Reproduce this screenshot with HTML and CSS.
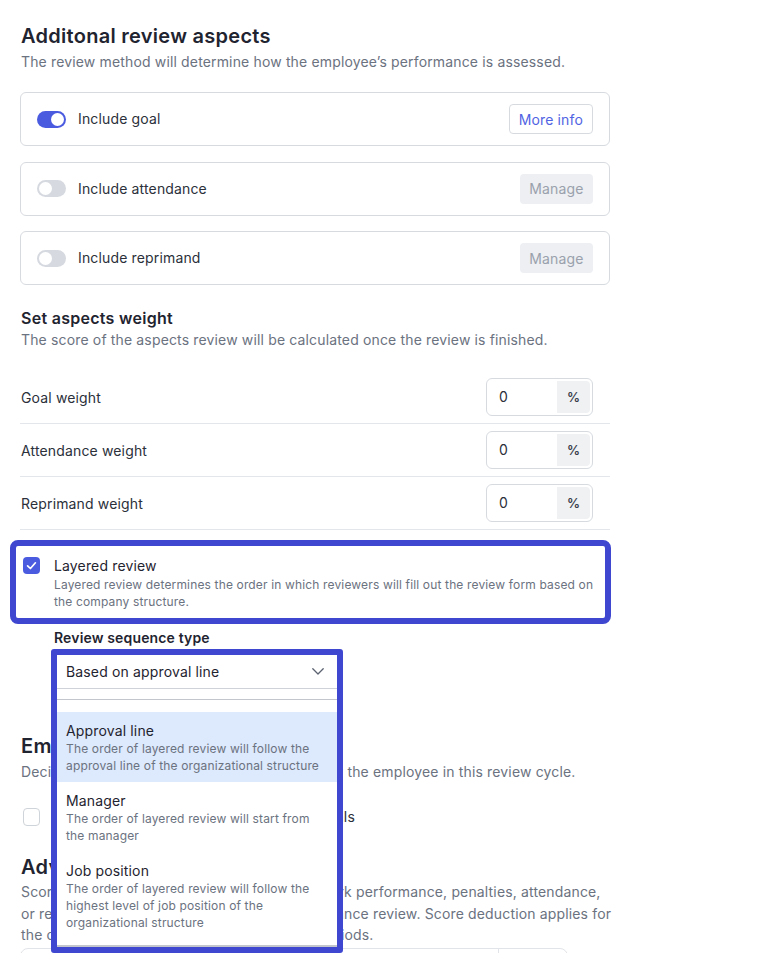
FILE: index.html
```html
<!DOCTYPE html>
<html lang="en">
<head>
<meta charset="utf-8">
<title>Review aspects</title>
<link rel="stylesheet" href="styles.css">
</head>
<body>
<main class="page">
  <section class="block">
    <h1 class="h1">Additonal review aspects</h1>
    <p class="sub">The review method will determine how the employee’s performance is assessed.</p>
    <div class="cards">
      <div class="card">
        <div class="card-left"><span class="toggle on"></span><span class="card-label">Include goal</span></div>
        <button class="btn btn-outline">More info</button>
      </div>
      <div class="card">
        <div class="card-left"><span class="toggle"></span><span class="card-label">Include attendance</span></div>
        <button class="btn btn-muted">Manage</button>
      </div>
      <div class="card">
        <div class="card-left"><span class="toggle"></span><span class="card-label">Include reprimand</span></div>
        <button class="btn btn-muted">Manage</button>
      </div>
    </div>
  </section>

  <section class="block block-weights">
    <h2 class="h2">Set aspects weight</h2>
    <p class="sub">The score of the aspects review will be calculated once the review is finished.</p>
    <div class="weights">
      <div class="wrow">
        <span class="wlabel">Goal weight</span>
        <div class="num"><span class="num-val">0</span><span class="num-unit">%</span></div>
      </div>
      <div class="wrow">
        <span class="wlabel">Attendance weight</span>
        <div class="num"><span class="num-val">0</span><span class="num-unit">%</span></div>
      </div>
      <div class="wrow">
        <span class="wlabel">Reprimand weight</span>
        <div class="num"><span class="num-val">0</span><span class="num-unit">%</span></div>
      </div>
    </div>
  </section>

  <div class="layered">
    <span class="check checked"><svg width="17" height="17" viewBox="0 0 17 17"><polyline points="4.6,8.8 7.4,11.5 12.4,5.8" fill="none" stroke="#fff" stroke-width="1.7" stroke-linecap="round" stroke-linejoin="round"/></svg></span>
    <div class="lay-text">
      <div class="lay-title">Layered review</div>
      <div class="lay-desc">Layered review determines the order in which reviewers will fill out the review form based on the company structure.</div>
    </div>
  </div>

  <div class="seq">
    <div class="seq-label">Review sequence type</div>
    <div class="sel-anchor">
      <div class="popover">
        <div class="sel">
          <span>Based on approval line</span>
          <svg width="12" height="7" viewBox="0 0 12 7"><polyline points="0.8,0.8 6,6 11.2,0.8" fill="none" stroke="#5b6270" stroke-width="1.3" stroke-linecap="round" stroke-linejoin="round"/></svg>
        </div>
        <div class="menu">
          <div class="opt active">
            <div class="opt-title">Approval line</div>
            <div class="opt-desc">The order of layered review will follow the approval line of the organizational structure</div>
          </div>
          <div class="opt">
            <div class="opt-title">Manager</div>
            <div class="opt-desc">The order of layered review will start from the manager</div>
          </div>
          <div class="opt">
            <div class="opt-title">Job position</div>
            <div class="opt-desc">The order of layered review will follow the highest level of job position of the organizational structure</div>
          </div>
        </div>
      </div>
    </div>
  </div>

  <section class="block block-emp">
    <h1 class="h1">Employee self review</h1>
    <p class="sub">Decide whether self reviews will be filled out by the employee in this review cycle.</p>
    <div class="crow">
      <span class="check"></span>
      <span class="crow-label">Enable self review for all the employee goals</span>
    </div>
  </section>

  <section class="block block-adv">
    <h1 class="h1">Advanced score deduction</h1>
    <p class="sub para">Score deduction lowers the score based on work performance, penalties, attendance,<br>or reprimands were recorded during a performance review. Score deduction applies for<br>the cycles according to the selected review periods.</p>
    <div class="bottom-box"><div class="bb-cell"></div><div class="bb-cell2"></div></div>
  </section>
</main>
</body>
</html>
```

FILE: styles.css
```css
* { box-sizing: border-box; margin: 0; padding: 0; }
html, body { background: #ffffff; }
body {
  font-family: Inter, "Noto Sans", sans-serif;
  color: #1f2430;
  letter-spacing: 0.15px;
  overflow: hidden;
}
.page {
  width: 590px;
  margin-left: 20px;
  padding-top: 22px;
}
.h1 {
  font-size: 20px;
  font-weight: 600;
  line-height: 28px;
  letter-spacing: 0.28px;
  color: #1f2430;
  padding-left: 1px;
}
.h2 {
  font-size: 16px;
  font-weight: 600;
  line-height: 24px;
  letter-spacing: 0.28px;
  color: #1f2430;
  padding-left: 1px;
}
.sub {
  font-size: 14px;
  line-height: 20px;
  color: #6b7280;
  margin-top: 2px;
  padding-left: 1px;
}
.h2 + .sub { margin-top: 0; }

.cards {
  margin-top: 20px;
  display: flex;
  flex-direction: column;
  gap: 15.5px;
}
.card {
  height: 54px;
  border: 1px solid #d7dbe0;
  border-radius: 6px;
  padding: 0 16px;
  display: flex;
  align-items: center;
  justify-content: space-between;
}
.card-left { display: flex; align-items: center; gap: 12px; }
.card-label { font-size: 14px; line-height: 20px; color: #2b303a; }
.toggle {
  position: relative;
  width: 29px;
  height: 17px;
  border-radius: 9px;
  background: #d6dae0;
}
.toggle::after {
  content: "";
  position: absolute;
  top: 2px;
  left: 2px;
  width: 13px;
  height: 13px;
  border-radius: 50%;
  background: #fff;
}
.toggle.on { background: #4b5be0; }
.toggle.on::after { left: 14px; }
.btn {
  height: 30px;
  font-family: inherit;
  font-size: 14px;
  letter-spacing: 0.15px;
  border-radius: 4px;
  padding: 0 9px;
  background: #fff;
}
.btn-outline { border: 1px solid #d7dbe0; color: #5164e3; }
.btn-muted { border: 0; background: #edeff2; color: #9aa1ad; padding: 0 9.5px; }

.block-weights { margin-top: 21px; }
.weights { margin-top: 21px; }
.wrow {
  display: flex;
  align-items: center;
  justify-content: space-between;
  padding: 7px 17px 7px 1px;
  border-bottom: 1px solid #e3e6ea;
}
.wlabel { font-size: 14px; color: #2b303a; }
.num {
  width: 107px;
  height: 38px;
  border: 1px solid #d7dbe0;
  border-radius: 6px;
  padding: 2px;
  display: flex;
}
.num-val {
  flex: 1;
  padding-left: 10px;
  line-height: 32px;
  font-size: 14px;
  color: #2b303a;
}
.num-unit {
  width: 33px;
  background: #f0f1f3;
  border-radius: 0 4px 4px 0;
  text-align: center;
  line-height: 32px;
  font-size: 13px;
  font-weight: 600;
  color: #3a404b;
}

.layered {
  margin-top: 16px;
  margin-left: -4px;
  width: 589px;
  padding: 10px 7px 8px;
  outline: 6px solid #3f47d0;
  border-radius: 2px;
  display: flex;
  align-items: flex-start;
  gap: 14px;
}
.check {
  flex: none;
  width: 17px;
  height: 17px;
  border-radius: 4px;
  border: 1px solid #cfd4da;
  background: #fff;
  margin-top: 1px;
  display: flex;
}
.check.checked { background: #4b5be0; border: 0; }
.lay-title { font-size: 14px; line-height: 20px; color: #1f2430; }
.lay-desc { font-size: 12px; line-height: 17px; color: #6b7280; }

.seq { margin-top: 10px; padding-left: 34px; }
.seq-label { font-size: 14px; font-weight: 600; line-height: 20px; color: #1f2430; }
.sel-anchor {
  position: relative;
  margin-top: 7px;
  margin-left: 3px;
  width: 280px;
  height: 34px;
}
.popover {
  position: absolute;
  top: -6px;
  left: -6px;
  width: 292px;
  border: 6px solid #3f47d0;
  border-radius: 3px;
  background: #fff;
  z-index: 10;
}
.sel {
  height: 34px;
  border-bottom: 1px solid #cfd3d9;
  display: flex;
  align-items: center;
  justify-content: space-between;
  padding: 0 13px 0 9px;
  font-size: 14px;
  color: #1f2430;
}
.menu {
  margin-top: 10px;
  border-top: 1px solid #c3c7cd;
  border-bottom: 2px solid #c3c7cd;
  padding: 12px 0 6px;
}
.opt { padding: 10px 9px 8px; }
.opt.active { background: #dde9fc; }
.opt-title { font-size: 14px; line-height: 18px; color: #1f2430; }
.opt-desc { font-size: 12px; line-height: 17px; color: #6b7280; }

.block-emp { margin-top: 43px; }
.crow { margin-top: 25px; display: flex; align-items: center; gap: 14px; padding-left: 3px; }
.crow .check { margin-top: 0; width: 17px; height: 18px; }
.crow-label { font-size: 14px; line-height: 20px; color: #2b303a; }

.block-adv { margin-top: 26px; }
.para { line-height: 21.5px; margin-top: 0; white-space: nowrap; }
.bottom-box {
  margin-top: 2px;
  width: 548px;
  height: 40px;
  border: 1px solid #e1e4e8;
  border-radius: 8px;
  display: flex;
}
.bb-cell { width: 478px; border-right: 1px solid #e1e4e8; }
.bb-cell2 { flex: 1; }
```
